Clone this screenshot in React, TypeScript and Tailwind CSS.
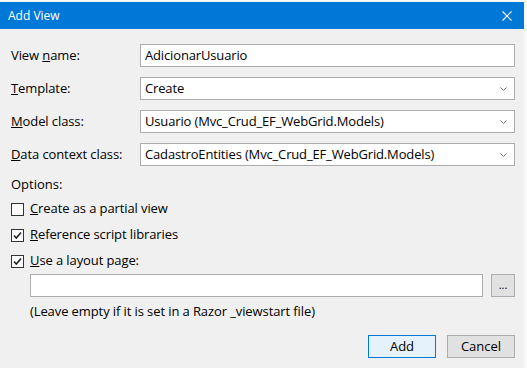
import React from "react";

const font = { fontFamily: '"Open Sans", "Noto Sans", sans-serif' };

function Chevron() {
  return (
    <svg width="7" height="4" viewBox="0 0 7 4" className="absolute right-[7px] top-[9px]">
      <path d="M0.5 0.5 L3.5 3.5 L6.5 0.5" fill="none" stroke="#707070" strokeWidth="1" />
    </svg>
  );
}

function Box({ text, select }: { text: string; select?: boolean }) {
  return (
    <div className="relative w-[375px] h-[23px] bg-white border border-[#adadad] flex items-center pl-[4px] text-[13px] tracking-[-0.15px] text-black">
      {text}
      {select && <Chevron />}
    </div>
  );
}

function Check({ checked }: { checked: boolean }) {
  return (
    <div className="w-[13px] h-[13px] bg-white border border-[#333333] relative shrink-0">
      {checked && (
        <svg width="11" height="11" viewBox="0 0 11 11" className="absolute left-0 top-0">
          <path d="M2 5.5 L4.3 8 L9 2.5" fill="none" stroke="#222" strokeWidth="1.6" />
        </svg>
      )}
    </div>
  );
}

function Row({ label, children }: { label: React.ReactNode; children: React.ReactNode }) {
  return (
    <div className="flex items-center h-[23px]">
      <div className="w-[129px] text-[13px] tracking-[-0.1px] text-black">{label}</div>
      {children}
    </div>
  );
}

export default function App() {
  return (
    <div className="w-[527px] h-[368px] bg-[#f0f0f0] flex flex-col border-r-[3px] border-[#f8f8f8]" style={font}>
      <div className="h-[2px] bg-[#f8f8f8]" />
      <div className="h-[27px] bg-[#0078d7] flex items-center justify-between pl-[8px] pr-[12px] text-white text-[12px]">
        <span>Add View</span>
        <svg width="10" height="10" viewBox="0 0 10 10">
          <path d="M0.5 0.5 L9.5 9.5 M9.5 0.5 L0.5 9.5" stroke="white" strokeWidth="1.1" />
        </svg>
      </div>
      <div className="flex flex-col pl-[11px] pt-[15px]">
        <div className="flex flex-col gap-[10px]">
          <Row label={<>View <u>n</u>ame:</>}>
            <Box text="AdicionarUsuario" />
          </Row>
          <Row label={<><u>T</u>emplate:</>}>
            <Box text="Create" select />
          </Row>
          <Row label={<><u>M</u>odel class:</>}>
            <Box text="Usuario (Mvc_Crud_EF_WebGrid.Models)" select />
          </Row>
          <Row label={<><u>D</u>ata context class:</>}>
            <Box text="CadastroEntities (Mvc_Crud_EF_WebGrid.Models)" select />
          </Row>
        </div>
        <div className="mt-[9px] text-[13px] text-black h-[18px] leading-[18px]">Options:</div>
        <div className="flex flex-col gap-[8px] mt-[7px] text-[13px] tracking-[-0.1px] text-black">
          <div className="flex items-center gap-[6px] h-[18px]">
            <Check checked={false} />
            <span><u>C</u>reate as a partial view</span>
          </div>
          <div className="flex items-center gap-[6px] h-[18px]">
            <Check checked />
            <span><u>R</u>eference script libraries</span>
          </div>
          <div className="flex items-center gap-[6px] h-[18px]">
            <Check checked />
            <span><u>U</u>se a layout page:</span>
          </div>
        </div>
        <div className="flex items-center mt-[4px] pl-[19px]">
          <div className="w-[453px] h-[23px] bg-white border border-[#adadad]" />
          <div className="ml-[8px] w-[24px] h-[23px] bg-[#e1e1e1] border border-[#adadad] flex items-center justify-center text-[11px] text-black leading-none pb-[2px]">...</div>
        </div>
        <div className="pl-[19px] mt-[5px] text-[13px] tracking-[-0.1px] text-black h-[18px] leading-[18px]">
          (Leave empty if it is set in a Razor _viewstart file)
        </div>
        <div className="flex justify-end gap-[11px] mt-[15px] pr-[9px]">
          <div className="w-[68px] h-[23px] bg-[#e5f1fb] border border-[#0078d7] flex items-center justify-center text-[13px] text-black">Add</div>
          <div className="w-[68px] h-[23px] bg-[#e1e1e1] border border-[#adadad] flex items-center justify-center text-[13px] text-black">Cancel</div>
        </div>
      </div>
    </div>
  );
}
